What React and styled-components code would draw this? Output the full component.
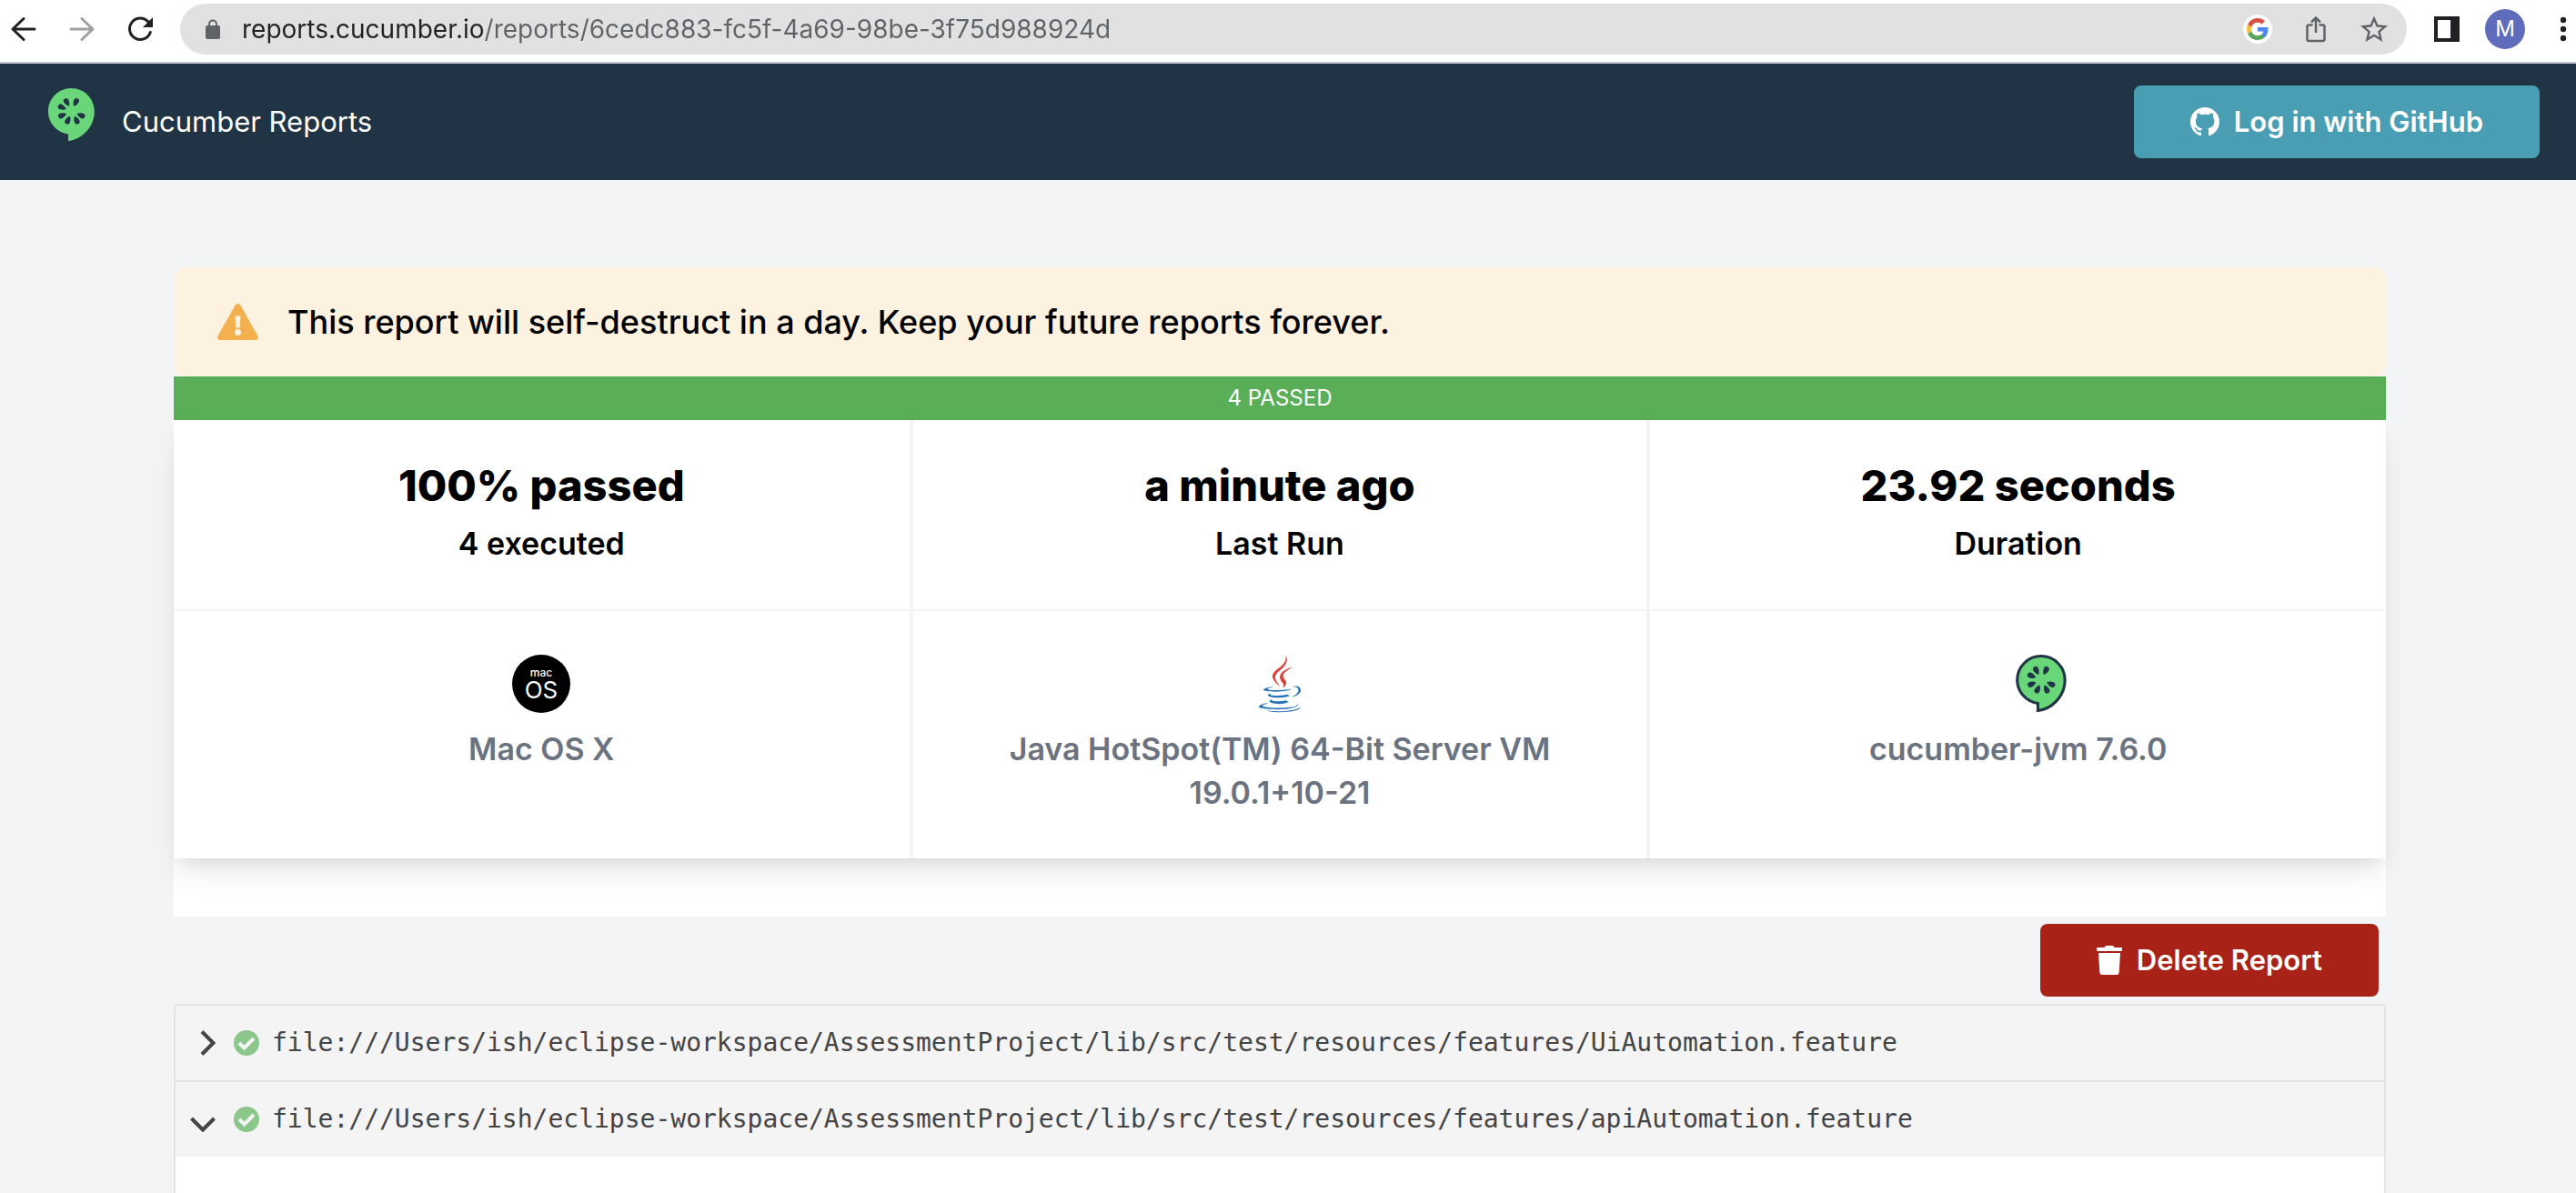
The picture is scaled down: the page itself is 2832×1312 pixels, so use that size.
import React, { useState } from "react";
import styled, { createGlobalStyle } from "styled-components";

const GlobalStyle = createGlobalStyle`
  *, *::before, *::after { box-sizing: border-box; }
  body {
    margin: 0;
    background: #f3f4f6;
    color: #000;
    font-family: Inter, "Liberation Sans", sans-serif;
  }
  button { border: 0; padding: 0; font: inherit; cursor: pointer; }
  h2, p { margin: 0; }
  svg { display: block; flex: none; }
`;

const Page = styled.div`
  display: flex;
  flex-direction: column;
  height: 100vh;
  overflow: hidden;
`;

/* Browser toolbar */

const BrowserBar = styled.div`
  display: flex;
  flex: none;
  align-items: center;
  gap: 30px;
  padding: 4px 0 8px 12px;
  background: #fff;
  border-bottom: 2px solid #c9cacc;
`;

const NavGroup = styled.nav`
  display: flex;
  gap: 36px;
`;

const ToolGroup = styled.div`
  display: flex;
  align-items: center;
  gap: 28px;
`;

const IconButton = styled.button`
  display: flex;
  align-items: center;
  justify-content: center;
  width: ${(p) => p.$size || 28}px;
  height: ${(p) => p.$size || 28}px;
  background: ${(p) => p.$background || "none"};
  border-radius: 50%;
  color: ${(p) => p.$color || "#202124"};
`;

const AddressBar = styled.div`
  display: flex;
  flex: 1;
  align-items: center;
  gap: 32px;
  height: 56px;
  padding: 0 20px 0 28px;
  border-radius: 28px;
  background: #e1e1e1;
`;

const AddressLabel = styled.label`
  display: flex;
  flex: 1;
  align-items: center;
  gap: 24px;
`;

const AddressInput = styled.input`
  flex: 1;
  min-width: 0;
  height: 40px;
  padding: 0;
  border: 0;
  outline: 0;
  font: 400 28px/40px Inter, "Liberation Sans", sans-serif;
  color: #5f6368;
  background: linear-gradient(to right, #202124 266px, #5f6368 266px);
  background-clip: text;
  -webkit-text-fill-color: transparent;
`;

const Avatar = styled.button`
  width: 44px;
  height: 44px;
  border-radius: 50%;
  background: #5f6bbb;
  color: #fff;
  font-size: 24px;
  line-height: 44px;
`;

/* Site header */

const Header = styled.header`
  display: flex;
  flex: none;
  align-items: center;
  justify-content: space-between;
  height: 128px;
  padding: 0 40px 0 53px;
  background: #203445;
`;

const Brand = styled.a`
  display: flex;
  align-items: center;
  gap: 30px;
  color: #fff;
  font-size: 31px;
  line-height: 48px;
  text-decoration: none;
`;

const ActionButton = styled.button`
  display: flex;
  align-items: center;
  gap: 16px;
  height: 80px;
  padding: 0 62px;
  border-radius: 8px;
  background: ${(p) => (p.$danger ? "#a92217" : "#499eb3")};
  color: #fff;
  font-size: 31px;
  font-weight: 600;
  line-height: 48px;
`;

/* Report */

const Main = styled.main`
  display: flex;
  flex: 1;
  flex-direction: column;
  min-height: 0;
  padding: 96px 18px 0 0;
`;

const Container = styled.div`
  display: flex;
  flex: 1;
  flex-direction: column;
  width: 100%;
  max-width: 2432px;
  margin: 0 auto;
`;

const Alert = styled.div`
  display: flex;
  flex: none;
  align-items: center;
  gap: 32px;
  height: 120px;
  padding: 0 48px;
  border-radius: 12px;
  background: #fdf1df;
  font-size: 36px;
  font-weight: 500;
  line-height: 48px;
`;

const PassedBar = styled.div`
  flex: none;
  background: #5aae58;
  color: #fff;
  font-size: 24px;
  line-height: 48px;
  text-align: center;
`;

const Summary = styled.section`
  flex: none;
  padding-bottom: 64px;
  background: #fff;
`;

const StatGrid = styled.div`
  display: grid;
  grid-template-columns: repeat(3, 1fr);
  background: #fff;
  box-shadow: 0 20px 30px -6px rgba(0, 0, 0, 0.1),
    0 8px 12px -4px rgba(0, 0, 0, 0.06);
`;

const Stat = styled.div`
  display: flex;
  flex-direction: column;
  align-items: center;
  padding: 48px;
  border: 0 solid #f3f4f6;
  border-left-width: ${(p) => (p.$first ? 0 : 2)}px;
  border-right-width: ${(p) => (p.$last ? 0 : 2)}px;
  border-bottom-width: ${(p) => (p.$bottom ? 0 : 2)}px;
`;

const StatValue = styled.h2`
  font-size: 47px;
  font-weight: 800;
  line-height: 48px;
`;

const StatLabel = styled.p`
  margin-top: 16px;
  color: ${(p) => (p.$muted ? "#6b7280" : "#000")};
  font-size: 34px;
  font-weight: 600;
  line-height: 48px;
  text-align: center;
`;

const Actions = styled.div`
  display: flex;
  flex: none;
  justify-content: flex-end;
  padding: 8px;
`;

const Accordion = styled.section`
  display: flex;
  flex: 1;
  flex-direction: column;
  border: 2px solid #e4e4e4;
  border-bottom: 0;
  border-radius: 4px 4px 0 0;
  background: #fff;
`;

const FeatureHeader = styled.button`
  display: flex;
  flex: none;
  align-items: center;
  gap: 14px;
  height: 82px;
  padding: 0 16px;
  background: #f4f4f4;
  color: #444;
  font: 400 28px/40px "DejaVu Sans Mono", monospace;
  text-align: left;

  & + & {
    height: 84px;
    border-top: 2px solid #e4e4e4;
  }
`;

const Chevron = styled.svg`
  margin-right: 6px;
  transform: rotate(${(p) => (p.$open ? 90 : 0)}deg);
`;

const FeatureBody = styled.div`
  flex: 1;
  background: #fff;
`;

const SEEDS = [
  [20.5, 15.5, -28],
  [30.3, 15.5, 25],
  [15.3, 21, -66],
  [15.5, 29.8, -112],
  [21.8, 35.2, -155],
  [31, 35.2, 155],
  [36, 29.8, 112],
];

function CucumberShape({ outlined }) {
  return (
    <>
      <path
        d="M25.4 0C11.4 0 0 11.4 0 25.4C0 37.6 8.8 48.3 22 50.4V58C36 56.6 50.8 43.5 50.8 25.4C50.8 11.4 39.4 0 25.4 0Z"
        fill="#69d779"
        stroke={outlined ? "#203445" : "none"}
        strokeWidth="3"
      />
      {SEEDS.map(([x, y, angle]) => (
        <path
          key={angle}
          d="M0 4.8C-1.6 3.4 -2.9 0.6 -2.9 -1.7A2.9 2.9 0 0 1 2.9 -1.7C2.9 0.6 1.6 3.4 0 4.8Z"
          transform={`translate(${x} ${y}) rotate(${angle})`}
          fill="#203445"
        />
      ))}
    </>
  );
}

function JavaIcon() {
  return (
    <svg width="64" height="64" viewBox="0 0 128 128" aria-hidden="true">
      <g fill="#2873b9">
        <path d="M47.617 98.12s-4.767 2.774 3.397 3.71c9.892 1.13 14.947.968 25.845-1.092 0 0 2.871 1.795 6.873 3.351-24.439 10.47-55.308-.607-36.115-5.969zM44.629 84.455s-5.348 3.959 2.823 4.805c10.567 1.091 18.91 1.18 33.354-1.6 0 0 1.993 2.025 5.132 3.131-29.542 8.64-62.446.68-41.309-6.336z" />
        <path d="M102.123 108.229s3.529 2.91-3.888 5.159c-14.102 4.272-58.706 5.56-71.094.171-4.451-1.938 3.899-4.625 6.526-5.192 2.739-.593 4.303-.485 4.303-.485-4.953-3.487-32.013 6.85-13.743 9.815 49.821 8.076 90.817-3.637 77.896-9.468zM49.912 70.294s-22.686 5.389-8.033 7.348c6.188.828 18.518.638 30.011-.326 9.39-.789 18.813-2.474 18.813-2.474s-3.308 1.419-5.704 3.053c-23.042 6.061-67.544 3.238-54.731-2.958 10.832-5.239 19.644-4.643 19.644-4.643zM90.609 93.041c23.421-12.167 12.591-23.86 5.032-22.285-1.848.385-2.677.72-2.677.72s.688-1.079 2-1.543c14.953-5.255 26.451 15.503-4.823 23.725 0-.002.359-.327.468-.617z" />
        <path d="M52.214 126.021c22.476 1.437 57-.8 57.817-11.436 0 0-1.571 4.032-18.577 7.231-19.186 3.612-42.854 3.191-56.887.874 0 .001 2.875 2.381 17.647 3.331z" />
      </g>
      <g fill="#dc4138">
        <path d="M69.802 61.271c6.025 6.935-1.58 13.17-1.58 13.17s15.289-7.891 8.269-17.777c-6.559-9.215-11.587-13.792 15.635-29.58 0 .001-42.731 10.67-22.324 34.187z" />
        <path d="M76.491 1.587s12.968 12.976-12.303 32.923c-20.266 16.006-4.621 25.13-.007 35.559-11.831-10.673-20.509-20.07-14.688-28.815 8.548-12.834 32.229-19.059 26.998-39.667z" />
      </g>
    </svg>
  );
}

function MacIcon() {
  return (
    <svg width="64" height="64" viewBox="0 0 64 64" aria-hidden="true">
      <circle cx="32" cy="32" r="32" />
      <g fill="#fff" textAnchor="middle">
        <text x="32" y="24" fontSize="12" fontWeight="500">mac</text>
        <text x="32" y="48" fontSize="26">OS</text>
      </g>
    </svg>
  );
}

function Arrow({ flipped }) {
  return (
    <svg width="28" height="28" viewBox="0 0 28 28" fill="none" stroke="currentColor" strokeWidth="3" strokeLinecap="round" strokeLinejoin="round">
      <path d={flipped ? "M2 14H26M14 2.5L26 14L14 25.5" : "M26 14H2M14 2.5L2 14L14 25.5"} />
    </svg>
  );
}

function Browser() {
  return (
    <BrowserBar>
      <NavGroup aria-label="Browser">
        <IconButton aria-label="Back"><Arrow /></IconButton>
        <IconButton aria-label="Forward" $color="#a0a0a2"><Arrow flipped /></IconButton>
        <IconButton aria-label="Reload">
          <svg width="28" height="28" viewBox="0 0 28 28">
            <path d="M25.3 17.5A11.7 11.7 0 1 1 22.5 5.5L24 8" fill="none" stroke="currentColor" strokeWidth="3" strokeLinecap="round" />
            <path d="M28 1V12H17Z" fill="currentColor" />
          </svg>
        </IconButton>
      </NavGroup>
      <AddressBar>
        <AddressLabel>
          <svg width="16" height="22" viewBox="0 0 16 22" aria-hidden="true">
            <path d="M4 9V5.5A4 4 0 0 1 12 5.5V9" fill="none" stroke="#5f6368" strokeWidth="2" />
            <rect y="7" width="16" height="15" rx="2" fill="#5f6368" />
          </svg>
          <AddressInput
            aria-label="Address"
            defaultValue="reports.cucumber.io/reports/6cedc883-fc5f-4a69-98be-3f75d988924d"
          />
        </AddressLabel>
        <IconButton aria-label="Google" $size={32} $background="#fff">
          <svg width="24" height="24" viewBox="0 0 24 24">
            <path fill="#4f86ec" d="M23.5 12.3c0-.8-.1-1.6-.2-2.3H12v4.5h6.5c-.3 1.5-1.1 2.7-2.4 3.6v3h3.9c2.2-2.1 3.5-5.1 3.5-8.8z" />
            <path fill="#58a55c" d="M12 24c3.2 0 6-1.1 7.9-2.9l-3.9-3c-1.1.7-2.4 1.2-4 1.2-3.1 0-5.800-2.1-6.7-4.9H1.300v3.1C3.3 21.4 7.3 24 12 24z" />
            <path fill="#f1bf42" d="M5.3 14.4c-.3-.7-.4-1.5-.4-2.4s.1-1.6.4-2.4V6.6H1.3C.5 8.2 0 10 0 12s.5 3.8 1.3 5.4z" />
            <path fill="#d95040" d="M12 4.8c1.8 0 3.3.6 4.6 1.8l3.4-3.4C17.9 1.2 15.2 0 12 0 7.3 0 3.3 2.7 1.3 6.6l4 3.1C6.2 6.8 8.9 4.8 12 4.8z" />
          </svg>
        </IconButton>
        <IconButton aria-label="Share" $size={32} $color="#5f6368">
          <svg width="22" height="30" viewBox="0 0 22 30" fill="none" stroke="currentColor" strokeWidth="2.5">
            <path d="M7.5 10.5H3.5A2 2 0 0 0 1.5 12.5V26A2 2 0 0 0 3.5 28H18.5A2 2 0 0 0 20.5 26V12.5A2 2 0 0 0 18.5 10.5H14.5M11 19V3M6 7.5L11 2.5L16 7.5" />
          </svg>
        </IconButton>
        <IconButton aria-label="Bookmark" $size={32} $color="#5f6368">
          <svg width="30" height="30" viewBox="2 2 20 19.5" fill="currentColor">
            <path d="M22 9.24l-7.19-.62L12 2 9.19 8.63 2 9.24l5.46 4.73L5.82 21 12 17.27 18.18 21l-1.63-7.03L22 9.24zM12 15.4l-3.76 2.27 1-4.28-3.32-2.88 4.38-.38L12 6.1l1.71 4.04 4.38.38-3.32 2.88 1 4.28L12 15.4z" />
          </svg>
        </IconButton>
      </AddressBar>
      <ToolGroup>
        <IconButton aria-label="Side panel">
          <svg width="28" height="28" viewBox="0 0 28 28">
            <rect width="28" height="28" fill="#202124" />
            <rect x="4" y="4" width="14" height="20" fill="#fff" />
          </svg>
        </IconButton>
        <Avatar aria-label="Profile M">M</Avatar>
        <IconButton aria-label="Menu">
          <svg width="8" height="28" viewBox="0 0 8 28" fill="currentColor">
            <circle cx="4" cy="4" r="3.2" />
            <circle cx="4" cy="14" r="3.2" />
            <circle cx="4" cy="24" r="3.2" />
          </svg>
        </IconButton>
      </ToolGroup>
    </BrowserBar>
  );
}

const RESULTS = [
  { value: "100% passed", label: "4 executed" },
  { value: "a minute ago", label: "Last Run" },
  { value: "23.92 seconds", label: "Duration" },
];

const ENVIRONMENT = [
  { icon: <MacIcon />, label: "Mac OS X" },
  { icon: <JavaIcon />, label: "Java HotSpot(TM) 64-Bit Server VM 19.0.1+10-21" },
  {
    icon: (
      <svg width="106" height="64" viewBox="-50 -1.5 102.5 62" aria-hidden="true">
        <CucumberShape outlined />
      </svg>
    ),
    label: "cucumber-jvm 7.6.0",
  },
];

const FOLDER = "file:///Users/ish/eclipse-workspace/AssessmentProject/lib/src/test/resources/features/";
const FEATURES = ["UiAutomation.feature", "apiAutomation.feature"];

export default function App() {
  const [open, setOpen] = useState("apiAutomation.feature");

  return (
    <Page>
      <GlobalStyle />
      <Browser />
      <Header>
        <Brand href="#">
          <svg width="51" height="74" viewBox="0 0 51 74" aria-hidden="true">
            <CucumberShape />
          </svg>
          Cucumber Reports
        </Brand>
        <ActionButton>
          <svg width="32" height="32" viewBox="0 0 16 16" fill="currentColor" aria-hidden="true">
            <path d="M8 0C3.58 0 0 3.58 0 8c0 3.54 2.29 6.53 5.47 7.59.4.07.55-.17.55-.38 0-.19-.01-.82-.01-1.49-2.01.37-2.53-.49-2.69-.94-.09-.23-.48-.94-.82-1.13-.28-.15-.68-.52-.01-.53.63-.01 1.08.58 1.28.82.72 1.21 1.87.87 2.33.66.07-.52.28-.87.51-1.07-1.78-.2-3.64-.89-3.64-3.95 0-.87.31-1.59.82-2.15-.08-.2-.36-1.02.08-2.12 0 0 .67-.21 2.2.82.64-.18 1.32-.27 2-.27.68 0 1.36.09 2 .27 1.53-1.04 2.2-.82 2.2-.82.44 1.1.16 1.92.08 2.12.51.56.82 1.27.82 2.15 0 3.07-1.87 3.75-3.65 3.95.29.25.54.73.54 1.48 0 1.07-.01 1.93-.01 2.2 0 .21.15.46.55.38A8.013 8.013 0 0 0 16 8c0-4.42-3.58-8-8-8z" />
          </svg>
          Log in with GitHub
        </ActionButton>
      </Header>
      <Main>
        <Container>
          <Alert role="alert">
            <svg width="45" height="40" viewBox="0 0 45 40" aria-hidden="true">
              <path d="M19.5 1.7a3.5 3.5 0 0 1 6 0L44.5 35.5a3 3 0 0 1-2.6 4.5H3.1a3 3 0 0 1-2.6-4.5Z" fill="#f4b04f" />
              <path d="M19.5 14.5q0-1 1-1h4q1 0 1 1l-.7 11q-.1 1-1 1h-2.6q-.9 0-1-1Z" fill="#fdf1df" />
              <circle cx="22.5" cy="31.5" r="3.5" fill="#fdf1df" />
            </svg>
            <p>This report will self-destruct in a day. Keep your future reports forever.</p>
          </Alert>
          <PassedBar>4 PASSED</PassedBar>
          <Summary>
            <StatGrid>
              {RESULTS.map((r, i) => (
                <Stat key={r.label} $first={i === 0} $last={i === 2}>
                  <StatValue>{r.value}</StatValue>
                  <StatLabel>{r.label}</StatLabel>
                </Stat>
              ))}
              {ENVIRONMENT.map((e, i) => (
                <Stat key={e.label} $first={i === 0} $last={i === 2} $bottom>
                  {e.icon}
                  <StatLabel $muted>{e.label}</StatLabel>
                </Stat>
              ))}
            </StatGrid>
          </Summary>
          <Actions>
            <ActionButton $danger>
              <svg width="28" height="32" viewBox="0 0 28 32" fill="currentColor" aria-hidden="true">
                <path d="M1 2H8.5Q9.5 0 10.5 0H17.5Q18.5 0 19.5 2H27Q28 2 28 3V5Q28 6 27 6H1Q0 6 0 5V3Q0 2 1 2ZM2 8H26L24.7 29.5Q24.5 32 22 32H6Q3.5 32 3.3 29.5Z" />
              </svg>
              Delete Report
            </ActionButton>
          </Actions>
          <Accordion>
            {FEATURES.map((name) => (
              <FeatureHeader
                key={name}
                aria-expanded={open === name}
                onClick={() => setOpen(name)}
              >
                <Chevron $open={open === name} width="28" height="28" viewBox="0 0 28 28" fill="none" stroke="#444" strokeWidth="4" aria-hidden="true">
                  <path d="M13 1.5L25.5 14L13 26.5" />
                </Chevron>
                <svg width="28" height="28" viewBox="0 0 28 28" aria-hidden="true">
                  <circle cx="14" cy="14" r="14" fill="#8bc78b" />
                  <path d="M6 14L11.5 19.5L22 9" fill="none" stroke="#f4f4f4" strokeWidth="4" />
                </svg>
                {FOLDER}
                {name}
              </FeatureHeader>
            ))}
            <FeatureBody />
          </Accordion>
        </Container>
      </Main>
    </Page>
  );
}
